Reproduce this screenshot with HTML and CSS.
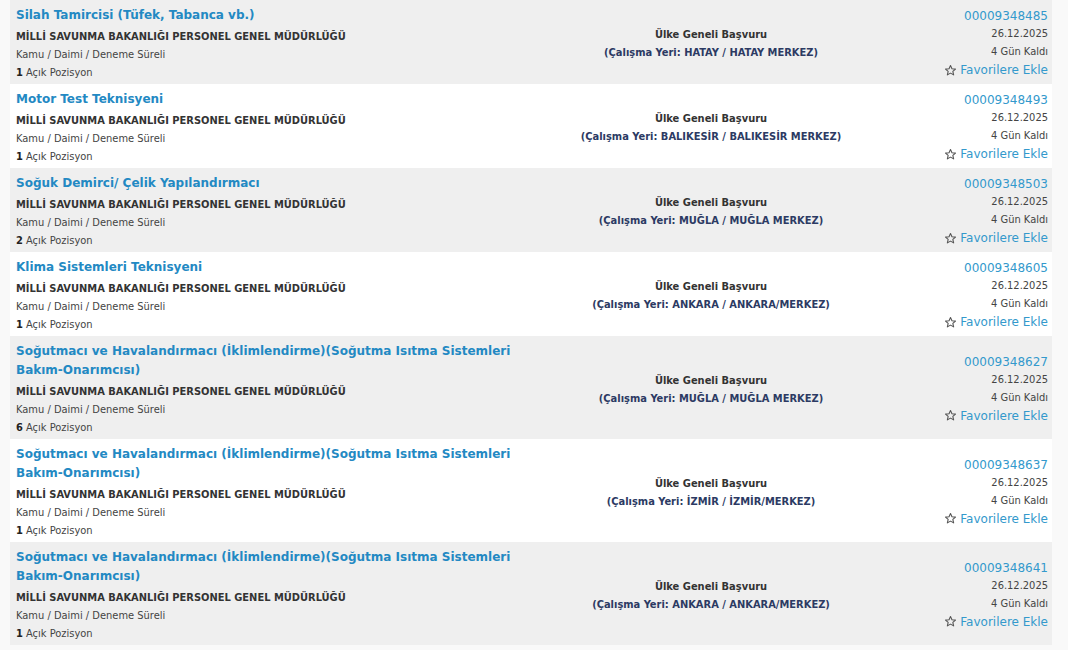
FILE: index.html
```html
<!DOCTYPE html>
<html lang="tr">
<head>
  <meta charset="UTF-8" />
  <title>İlanlar</title>
  <link rel="stylesheet" href="styles.css">
</head>
<body>
<div class="list">

  <div class="row gray">
    <div class="info">
      <a class="title" href="#">Silah Tamircisi (Tüfek, Tabanca vb.)</a>
      <div class="org">MİLLİ SAVUNMA BAKANLIĞI PERSONEL GENEL MÜDÜRLÜĞÜ</div>
      <div class="meta">Kamu / Daimi / Deneme Süreli</div>
      <div class="meta"><b>1</b> Açık Pozisyon</div>
    </div>
    <div class="place">
      <div class="apply">Ülke Geneli Başvuru</div>
      <div class="where">(Çalışma Yeri: HATAY / HATAY MERKEZ)</div>
    </div>
    <div class="side">
      <a class="no" href="#">00009348485</a>
      <div class="date">26.12.2025</div>
      <div class="date">4 Gün Kaldı</div>
      <a class="fav" href="#"><svg viewBox="0 0 24 24"><path d="M12 2.8l2.7 6 6.5.6-4.9 4.3 1.5 6.4L12 16.8l-5.8 3.3 1.5-6.4-4.9-4.3 6.5-.6z"/></svg>Favorilere Ekle</a>
    </div>
  </div>

  <div class="row">
    <div class="info">
      <a class="title" href="#">Motor Test Teknisyeni</a>
      <div class="org">MİLLİ SAVUNMA BAKANLIĞI PERSONEL GENEL MÜDÜRLÜĞÜ</div>
      <div class="meta">Kamu / Daimi / Deneme Süreli</div>
      <div class="meta"><b>1</b> Açık Pozisyon</div>
    </div>
    <div class="place">
      <div class="apply">Ülke Geneli Başvuru</div>
      <div class="where">(Çalışma Yeri: BALIKESİR / BALIKESİR MERKEZ)</div>
    </div>
    <div class="side">
      <a class="no" href="#">00009348493</a>
      <div class="date">26.12.2025</div>
      <div class="date">4 Gün Kaldı</div>
      <a class="fav" href="#"><svg viewBox="0 0 24 24"><path d="M12 2.8l2.7 6 6.5.6-4.9 4.3 1.5 6.4L12 16.8l-5.8 3.3 1.5-6.4-4.9-4.3 6.5-.6z"/></svg>Favorilere Ekle</a>
    </div>
  </div>

  <div class="row gray">
    <div class="info">
      <a class="title" href="#">Soğuk Demirci/ Çelik Yapılandırmacı</a>
      <div class="org">MİLLİ SAVUNMA BAKANLIĞI PERSONEL GENEL MÜDÜRLÜĞÜ</div>
      <div class="meta">Kamu / Daimi / Deneme Süreli</div>
      <div class="meta"><b>2</b> Açık Pozisyon</div>
    </div>
    <div class="place">
      <div class="apply">Ülke Geneli Başvuru</div>
      <div class="where">(Çalışma Yeri: MUĞLA / MUĞLA MERKEZ)</div>
    </div>
    <div class="side">
      <a class="no" href="#">00009348503</a>
      <div class="date">26.12.2025</div>
      <div class="date">4 Gün Kaldı</div>
      <a class="fav" href="#"><svg viewBox="0 0 24 24"><path d="M12 2.8l2.7 6 6.5.6-4.9 4.3 1.5 6.4L12 16.8l-5.8 3.3 1.5-6.4-4.9-4.3 6.5-.6z"/></svg>Favorilere Ekle</a>
    </div>
  </div>

  <div class="row">
    <div class="info">
      <a class="title" href="#">Klima Sistemleri Teknisyeni</a>
      <div class="org">MİLLİ SAVUNMA BAKANLIĞI PERSONEL GENEL MÜDÜRLÜĞÜ</div>
      <div class="meta">Kamu / Daimi / Deneme Süreli</div>
      <div class="meta"><b>1</b> Açık Pozisyon</div>
    </div>
    <div class="place">
      <div class="apply">Ülke Geneli Başvuru</div>
      <div class="where">(Çalışma Yeri: ANKARA / ANKARA/MERKEZ)</div>
    </div>
    <div class="side">
      <a class="no" href="#">00009348605</a>
      <div class="date">26.12.2025</div>
      <div class="date">4 Gün Kaldı</div>
      <a class="fav" href="#"><svg viewBox="0 0 24 24"><path d="M12 2.8l2.7 6 6.5.6-4.9 4.3 1.5 6.4L12 16.8l-5.8 3.3 1.5-6.4-4.9-4.3 6.5-.6z"/></svg>Favorilere Ekle</a>
    </div>
  </div>

  <div class="row gray">
    <div class="info">
      <a class="title" href="#">Soğutmacı ve Havalandırmacı (İklimlendirme)(Soğutma Isıtma Sistemleri Bakım-Onarımcısı)</a>
      <div class="org">MİLLİ SAVUNMA BAKANLIĞI PERSONEL GENEL MÜDÜRLÜĞÜ</div>
      <div class="meta">Kamu / Daimi / Deneme Süreli</div>
      <div class="meta"><b>6</b> Açık Pozisyon</div>
    </div>
    <div class="place">
      <div class="apply">Ülke Geneli Başvuru</div>
      <div class="where">(Çalışma Yeri: MUĞLA / MUĞLA MERKEZ)</div>
    </div>
    <div class="side">
      <a class="no" href="#">00009348627</a>
      <div class="date">26.12.2025</div>
      <div class="date">4 Gün Kaldı</div>
      <a class="fav" href="#"><svg viewBox="0 0 24 24"><path d="M12 2.8l2.7 6 6.5.6-4.9 4.3 1.5 6.4L12 16.8l-5.8 3.3 1.5-6.4-4.9-4.3 6.5-.6z"/></svg>Favorilere Ekle</a>
    </div>
  </div>

  <div class="row">
    <div class="info">
      <a class="title" href="#">Soğutmacı ve Havalandırmacı (İklimlendirme)(Soğutma Isıtma Sistemleri Bakım-Onarımcısı)</a>
      <div class="org">MİLLİ SAVUNMA BAKANLIĞI PERSONEL GENEL MÜDÜRLÜĞÜ</div>
      <div class="meta">Kamu / Daimi / Deneme Süreli</div>
      <div class="meta"><b>1</b> Açık Pozisyon</div>
    </div>
    <div class="place">
      <div class="apply">Ülke Geneli Başvuru</div>
      <div class="where">(Çalışma Yeri: İZMİR / İZMİR/MERKEZ)</div>
    </div>
    <div class="side">
      <a class="no" href="#">00009348637</a>
      <div class="date">26.12.2025</div>
      <div class="date">4 Gün Kaldı</div>
      <a class="fav" href="#"><svg viewBox="0 0 24 24"><path d="M12 2.8l2.7 6 6.5.6-4.9 4.3 1.5 6.4L12 16.8l-5.8 3.3 1.5-6.4-4.9-4.3 6.5-.6z"/></svg>Favorilere Ekle</a>
    </div>
  </div>

  <div class="row gray">
    <div class="info">
      <a class="title" href="#">Soğutmacı ve Havalandırmacı (İklimlendirme)(Soğutma Isıtma Sistemleri Bakım-Onarımcısı)</a>
      <div class="org">MİLLİ SAVUNMA BAKANLIĞI PERSONEL GENEL MÜDÜRLÜĞÜ</div>
      <div class="meta">Kamu / Daimi / Deneme Süreli</div>
      <div class="meta"><b>1</b> Açık Pozisyon</div>
    </div>
    <div class="place">
      <div class="apply">Ülke Geneli Başvuru</div>
      <div class="where">(Çalışma Yeri: ANKARA / ANKARA/MERKEZ)</div>
    </div>
    <div class="side">
      <a class="no" href="#">00009348641</a>
      <div class="date">26.12.2025</div>
      <div class="date">4 Gün Kaldı</div>
      <a class="fav" href="#"><svg viewBox="0 0 24 24"><path d="M12 2.8l2.7 6 6.5.6-4.9 4.3 1.5 6.4L12 16.8l-5.8 3.3 1.5-6.4-4.9-4.3 6.5-.6z"/></svg>Favorilere Ekle</a>
    </div>
  </div>

</div>
</body>
</html>
```

FILE: styles.css
```css
body {
  margin: 0;
  background: #f9f9f9;
  font-family: 'DejaVu Sans Condensed', 'DejaVu Sans', sans-serif;
  color: #333;
}
a {
  text-decoration: none;
}
.list {
  margin: 0 16px 0 10px;
}
.row {
  display: grid;
  grid-template-columns: 557px 276px 1fr;
  align-items: center;
  background: #fff;
  padding: 6px 4px 2px 6px;
}
.row.gray {
  background: #efefef;
}
.title {
  display: block;
  max-width: 520px;
  font-family: 'DejaVu Sans', Verdana, sans-serif;
  font-size: 12px;
  font-weight: bold;
  line-height: 19px;
  color: #2389c3;
  margin-bottom: 3px;
}
.org {
  font-size: 11px;
  font-weight: bold;
  line-height: 18px;
  color: #333;
}
.meta {
  font-size: 11px;
  line-height: 18px;
  color: #444;
}
.meta b {
  color: #222;
}
.place {
  text-align: center;
  font-size: 11px;
  font-weight: bold;
  line-height: 18px;
}
.apply {
  color: #333;
}
.where {
  color: #2c3a63;
}
.side {
  text-align: right;
  line-height: 18px;
}
.no {
  display: block;
  font-family: 'DejaVu Sans', Verdana, sans-serif;
  font-size: 12px;
  color: #3399cc;
}
.date {
  font-size: 11px;
  color: #444;
}
.fav {
  display: inline-flex;
  align-items: center;
  gap: 3px;
  font-family: 'DejaVu Sans', Verdana, sans-serif;
  font-size: 12px;
  color: #3399cc;
}
.fav svg {
  width: 13px;
  height: 13px;
  fill: none;
  stroke: #555;
  stroke-width: 2;
  stroke-linejoin: round;
}
```
